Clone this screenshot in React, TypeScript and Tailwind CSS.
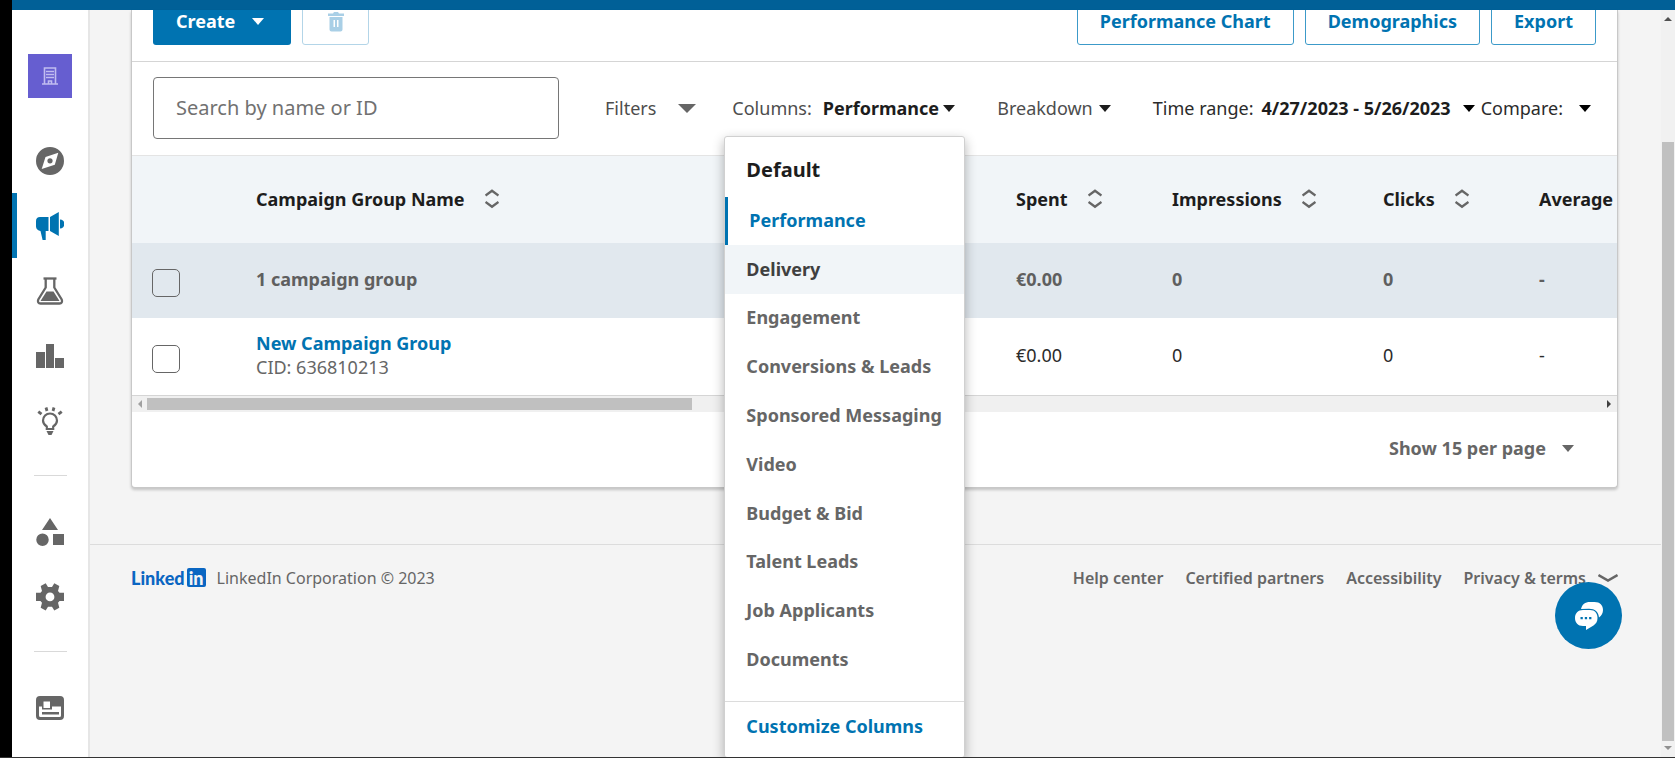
import type { ReactNode } from "react";
import { clsx } from "clsx";

const columnSets = [
  "Performance",
  "Delivery",
  "Engagement",
  "Conversions & Leads",
  "Sponsored Messaging",
  "Video",
  "Budget & Bid",
  "Talent Leads",
  "Job Applicants",
  "Documents",
];

const metrics = [
  { label: "Spent", total: "€0.00", value: "€0.00" },
  { label: "Impressions", total: "0", value: "0" },
  { label: "Clicks", total: "0", value: "0" },
];

const footerLinks = ["Help center", "Certified partners", "Accessibility"];

function Caret({ className }: { className?: string }) {
  return (
    <svg viewBox="0 0 14 7" preserveAspectRatio="none" className={clsx("shrink-0", className)} fill="currentColor" aria-hidden>
      <path d="M0 0h14L7 7z" />
    </svg>
  );
}

function SortIcon() {
  return (
    <svg viewBox="0 0 14 20" className="h-5 w-[14px] shrink-0 text-[#666]" fill="none" stroke="currentColor" strokeWidth="2.4" aria-hidden>
      <path d="M0.5 6.500L7 1.800l6.500 4.700M0.5 13L7 17.800l6.500-4.800" />
    </svg>
  );
}

interface NavItemProps {
  label: string;
  active?: boolean;
  children: ReactNode;
}

function NavItem({ label, active, children }: NavItemProps) {
  return (
    <a
      href="#"
      aria-label={label}
      className={clsx(
        "flex h-[65px] w-full items-center justify-center border-l-[5px] pr-[5px]",
        active ? "border-[#0073b1] text-[#0073b1]" : "border-transparent text-[#666]",
      )}
    >
      <svg viewBox="0 0 28 28" className="size-7" fill="currentColor" aria-hidden>
        {children}
      </svg>
    </a>
  );
}

function Sidebar() {
  return (
    <nav className="flex w-[78px] shrink-0 flex-col items-center border-r-2 border-[#e6e6e6] bg-white pt-11">
      <a href="#" aria-label="Account" className="mb-[30px] flex size-11 shrink-0 items-center justify-center bg-[#665ed0] text-[#c1bdf0]">
        <svg viewBox="0 0 16 18" className="h-[18px] w-4" fill="none" stroke="currentColor" strokeWidth="1.6" aria-hidden>
          <path d="M2.5 17V1h11v16M0 17h16M4 4.5h8M4 7.5h8M4 10.5h8" />
          <path d="M6.5 17v-3h3v3" />
        </svg>
      </a>

      <NavItem label="Plan">
        <path
          fillRule="evenodd"
          d="M14 0a14 14 0 1 0 0 28a14 14 0 0 0 0-28zM22.300 5.700L18.800 17.800L5.700 22L9.500 10z"
        />
        <circle cx="14" cy="13.8" r="2.6" />
      </NavItem>
      <NavItem label="Advertise" active>
        <path d="M4 5h8.5v14H9.7v9H6.6L4.5 19C2 18.500 0 17 0 14.500V9c0-2.500 1.500-4 4-4zM14 5l8.800-5v24L14 19zM24 7.500a4.500 4.500 0 0 1 0 9z" />
      </NavItem>
      <NavItem label="Test">
        <g fill="none" stroke="currentColor" strokeWidth="2.3">
          <path d="M7.5 1.5h13" />
          <path d="M9.7 2v8.500L2.300 22.500C1.200 25 2.500 26.500 4.500 26.500h19c2 0 3.300-1.500 2.200-4L18.300 10.500V2" />
        </g>
        <path d="M10.5 14.5h7l6 9.500h-19z" />
      </NavItem>
      <NavItem label="Analyze">
        <path d="M0 10h9v16H0zM10 2h8v24h-8zM19 16h9v10h-9z" />
      </NavItem>
      <NavItem label="Insights">
        <path
          fill="none"
          stroke="currentColor"
          strokeWidth="2.2"
          d="M10.800 22v-2.500C8.500 18 7 16 7 13.500a7 7 0 0 1 14 0c0 2.500-1.500 4.500-3.800 6V22z"
        />
        <path d="M10.5 24h7l-2 4h-3z" />
        <path fill="none" stroke="currentColor" strokeWidth="2.8" d="M11 4l-1-3.500M17 4l1-3.500M5.500 7.200L2.300 4.600M22.500 7.200l3.200-2.600" />
      </NavItem>

      <hr className="mt-[22px] mb-[23px] w-[33px] border-[#d9d9d9]" />

      <NavItem label="Assets">
        <path d="M14 0l8 12H6zM6.500 15.500a6 6 0 1 1 0 12.500a6 6 0 0 1 0-12.500zM17 16h11v11H17z" />
      </NavItem>
      <NavItem label="Account settings">
        <path
          fillRule="evenodd"
          d="M4.700 3L9.700 0.300L12 4H16L18.300 0.300L23.300 3L22 8L23.500 9.800H28V18H23.500L22 19.800L23.300 24.800L18.300 27.500L16 23.800H12L9.700 27.500L4.700 24.800L6 19.800L4.500 18H0V9.800H4.500L6 8zM14 9.500a4.400 4.400 0 1 0 0 8.800a4.400 4.400 0 0 0 0-8.800z"
        />
      </NavItem>

      <hr className="mt-[22px] mb-[23px] w-[33px] border-[#d9d9d9]" />

      <NavItem label="Billing">
        <path
          fillRule="evenodd"
          d="M4 2h20a4 4 0 0 1 4 4v16a4 4 0 0 1-4 4H4a4 4 0 0 1-4-4V6a4 4 0 0 1 4-4zM3 12.500V21.500a1.500 1.500 0 0 0 1.500 1.500h19a1.500 1.500 0 0 0 1.500-1.500V12.500H16V15.500H6V12.500zM7.500 7.500v6.500h6.500V7.500z"
        />
        <path d="M6 18h17v2.500H6z" />
      </NavItem>
    </nav>
  );
}

function OutlineButton({ children }: { children: ReactNode }) {
  return (
    <button type="button" className="h-[46px] rounded-[3px] border border-[#3c9ac9] px-[22px] pb-[3px] text-lg font-bold text-[#0073b1]">
      {children}
    </button>
  );
}

function Toolbar() {
  return (
    <div className="flex h-[52px] items-end gap-[11px] overflow-hidden border-b border-[#d5d5d5] px-[21px] pb-4">
      <button type="button" className="flex h-[46px] items-center gap-[17px] rounded-[3px] bg-[#0073b1] pr-[27px] pb-[3px] pl-[23px] text-lg font-bold text-white">
        Create
        <Caret className="mt-0.5 h-[7px] w-3" />
      </button>
      <button
        type="button"
        aria-label="Delete"
        className="flex h-[46px] w-[67px] items-center justify-center rounded-[3px] border border-[#b3d5e8] text-[#a9cfe6]"
      >
        <svg viewBox="0 0 16 20" className="h-5 w-4" fill="currentColor" aria-hidden>
          <path d="M5 1.5L6 0h4l1 1.500h5V4H0V1.500z" />
          <path fillRule="evenodd" d="M1.500 5h13v12.500a2 2 0 0 1-2 2h-9a2 2 0 0 1-2-2zM5.500 8v7h1.500V8zM9 8v7h1.500V8z" />
        </svg>
      </button>
      <div className="ml-auto flex gap-[11px]">
        <OutlineButton>Performance Chart</OutlineButton>
        <OutlineButton>Demographics</OutlineButton>
        <OutlineButton>Export</OutlineButton>
      </div>
    </div>
  );
}

function ColumnsMenu() {
  return (
    <div className="absolute top-[42px] -left-2 z-10 flex w-[241px] flex-col rounded-[3px] border border-[#d0d0d0] bg-white text-lg font-bold text-[#666] shadow-[0_4px_12px_rgba(0,0,0,0.3)]">
      <h2 className="flex h-[60px] items-center px-[21px] pt-1.5 text-xl font-bold text-[#1d1d1d]">Default</h2>
      <ul className="flex h-[488px] flex-col">
        {columnSets.map((name) => (
          <li key={name} className="flex flex-1">
            <button
              type="button"
              className={clsx(
                "flex w-full items-center pb-0.5 pl-[21px] whitespace-nowrap",
                name === "Performance" && "border-l-[3px] border-[#0073b1] text-[#0073b1]",
                name === "Delivery" && "bg-[#f1f5f8] text-[#404040]",
              )}
            >
              {name}
            </button>
          </li>
        ))}
      </ul>
      <button type="button" className="mt-4 flex h-14 items-center border-t border-[#dcdcdc] px-[21px] pb-1.5 text-[#0073b1]">
        Customize Columns
      </button>
    </div>
  );
}

function FilterBar() {
  return (
    <div className="flex h-[94px] items-center border-b border-[#e4e4e4] pr-[26px] pb-0.5 pl-[21px] text-lg whitespace-nowrap text-[#4d4d4d]">
      <input
        type="search"
        aria-label="Search by name or ID"
        placeholder="Search by name or ID"
        className="h-[62px] w-[406px] rounded-[4px] border border-[#767676] px-[22px] text-xl placeholder:text-[#717171]"
      />
      <button type="button" className="ml-[46px] flex items-center gap-[22px]">
        Filters
        <Caret className="mt-0.5 h-[9px] w-[18px] text-[#666]" />
      </button>
      <div className="relative ml-9">
        <button type="button" className="flex items-center">
          Columns:
          <b className="mr-1 ml-[11px] font-bold text-[#1d1d1d]">Performance</b>
          <Caret className="mt-0.5 h-[7px] w-3 text-[#1d1d1d]" />
        </button>
        <ColumnsMenu />
      </div>
      <button type="button" className="ml-auto flex items-center gap-1.5">
        Breakdown
        <Caret className="mt-0.5 h-[7px] w-3 text-[#1d1d1d]" />
      </button>
      <button type="button" className="ml-auto flex items-center text-[#2b2b2b]">
        Time range:
        <b className="mr-3 ml-2 font-bold text-[#1d1d1d]">4/27/2023 - 5/26/2023</b>
        <Caret className="mt-0.5 h-[7px] w-3 text-black" />
      </button>
      <button type="button" className="ml-1.5 flex items-center gap-4 text-[#2b2b2b]">
        Compare:
        <Caret className="mt-0.5 h-[7px] w-3 text-black" />
      </button>
    </div>
  );
}

function RowCheckbox({ label }: { label: string }) {
  return (
    <input
      type="checkbox"
      aria-label={label}
      className="mt-2 block size-7 appearance-none rounded-[5px] border border-[#666]"
    />
  );
}

function CampaignTable() {
  return (
    <div className="overflow-hidden">
      <table className="w-full table-fixed text-left text-lg whitespace-nowrap [&_td]:pb-[3px] [&_th]:pb-[2px]">
        <colgroup>
          <col className="w-[124px]" />
          <col />
          <col className="w-[156px]" />
          <col className="w-[211px]" />
          <col className="w-[156px]" />
          <col className="w-[78px]" />
        </colgroup>
        <thead className="bg-[#f1f5f8] text-[#1d1d1d]">
          <tr className="h-[87px]">
            <td />
            <th className="font-bold">
              <button type="button" className="flex items-center gap-5">
                Campaign Group Name
                <SortIcon />
              </button>
            </th>
            {metrics.map(({ label }) => (
              <th key={label} className="font-bold">
                <button type="button" className="flex items-center gap-5">
                  {label}
                  <SortIcon />
                </button>
              </th>
            ))}
            <th className="font-bold">Average</th>
          </tr>
        </thead>
        <tbody>
          <tr className="h-[75px] bg-[#e1e8ee] font-bold text-[#5f5f5f]">
            <td className="pl-5">
              <RowCheckbox label="Select all campaign groups" />
            </td>
            <td>1 campaign group</td>
            {metrics.map(({ label, total }) => (
              <td key={label}>{total}</td>
            ))}
            <td>-</td>
          </tr>
          <tr className="h-[77px] border-b border-[#d5d5d5] text-[#2b2b2b]">
            <td className="pl-5">
              <RowCheckbox label="Select New Campaign Group" />
            </td>
            <td className="leading-6 text-[#666]">
              <a href="#" className="font-bold text-[#0073b1]">
                New Campaign Group
              </a>
              <p>CID: 636810213</p>
            </td>
            {metrics.map(({ label, value }) => (
              <td key={label}>{value}</td>
            ))}
            <td>-</td>
          </tr>
        </tbody>
      </table>
      <div className="flex h-4 items-center bg-[#f0f0f0] px-1" aria-hidden>
        <Caret className="h-1 w-2 rotate-90 text-[#a0a0a0]" />
        <div className="mr-auto ml-[3px] h-3 w-[545px] bg-[#c0c0c0]" />
        <Caret className="h-1 w-2 -rotate-90 text-[#404040]" />
      </div>
    </div>
  );
}

function Pagination() {
  return (
    <div className="flex h-[75px] items-center justify-end pr-[43px] pb-[3px] text-[#666]">
      <select aria-label="Rows per page" className="appearance-none text-lg font-bold">
        <option>Show 15 per page</option>
      </select>
      <Caret className="mt-0.5 ml-4 h-[7px] w-3" />
    </div>
  );
}

function Footer() {
  return (
    <footer className="mt-14 flex items-center border-t border-[#dcdcdc] pt-[21px] pr-[43px] pl-[41px] text-base text-[#666]">
      <a href="#" aria-label="LinkedIn" className="mr-[11px] flex items-center gap-[2px] font-['Lato'] text-[#0a66c2]">
        <span className="text-lg leading-6 font-black">Linked</span>
        <span className="flex size-[19px] items-center justify-center rounded-[2px] bg-[#0a66c2] text-lg leading-none font-black text-[#f4f4f4]">
          in
        </span>
      </a>
      LinkedIn Corporation © 2023
      <div className="ml-auto flex items-center gap-[22px] font-semibold">
        {footerLinks.map((link) => (
          <a key={link} href="#">
            {link}
          </a>
        ))}
        <button type="button" className="flex items-center gap-3">
          Privacy &amp; terms
          <svg viewBox="0 0 20 10" className="h-[10px] w-5" fill="none" stroke="currentColor" strokeWidth="2.5" aria-hidden>
            <path d="M0.5 2L10 7.500L19.500 2" />
          </svg>
        </button>
      </div>
    </footer>
  );
}

function PageScrollbar() {
  return (
    <div className="flex w-[14px] shrink-0 flex-col items-center bg-[#f1f1f1] py-[7px]" aria-hidden>
      <Caret className="h-1 w-2 rotate-180 text-[#505050]" />
      <div className="mt-[121px] mb-[5px] w-3 flex-1 bg-[#c0c0c0]" />
      <Caret className="h-1 w-2 text-[#909090]" />
    </div>
  );
}

export default function App() {
  return (
    <div className="flex h-screen flex-col overflow-hidden border-b border-[#333] bg-black pl-3 font-['Noto_Sans',sans-serif]">
      <header className="h-[10px] shrink-0 bg-[#016097]" />
      <div className="flex min-h-0 flex-1 bg-[#f4f4f4]">
        <Sidebar />
        <main className="min-w-0 flex-1">
          <section className="mr-[43px] ml-[41px] rounded-b-[4px] border border-t-0 border-[#c8c8c8] bg-white shadow-[0_2px_3px_rgba(0,0,0,0.2)]">
            <Toolbar />
            <FilterBar />
            <CampaignTable />
            <Pagination />
          </section>
          <Footer />
        </main>
        <PageScrollbar />
      </div>
      <button
        type="button"
        aria-label="Open chat"
        className="fixed right-[53px] bottom-[109px] z-20 flex size-[67px] items-center justify-center rounded-full bg-[#0073b1] text-white"
      >
        <svg viewBox="0 0 28 28" className="size-7" fill="currentColor" aria-hidden>
          <path d="M6 7C7 2.500 10 0 15 0h4.500C25 0 28 3.500 28 8c0 3-1.500 5.500-4 7.500C23.500 10 20 6.800 14 6.800z" />
          <path
            fillRule="evenodd"
            d="M8 8h7c5 0 7.500 3.500 7.500 8c0 3.500-1.500 5.800-4 7.500L11 28v-4H8c-5 0-8-3.500-8-8s3-8 8-8zM5.500 15v2.300h2.300V15zM9.800 15v2.300h2.300V15zM14.100 15v2.300h2.300V15z"
          />
        </svg>
      </button>
    </div>
  );
}
